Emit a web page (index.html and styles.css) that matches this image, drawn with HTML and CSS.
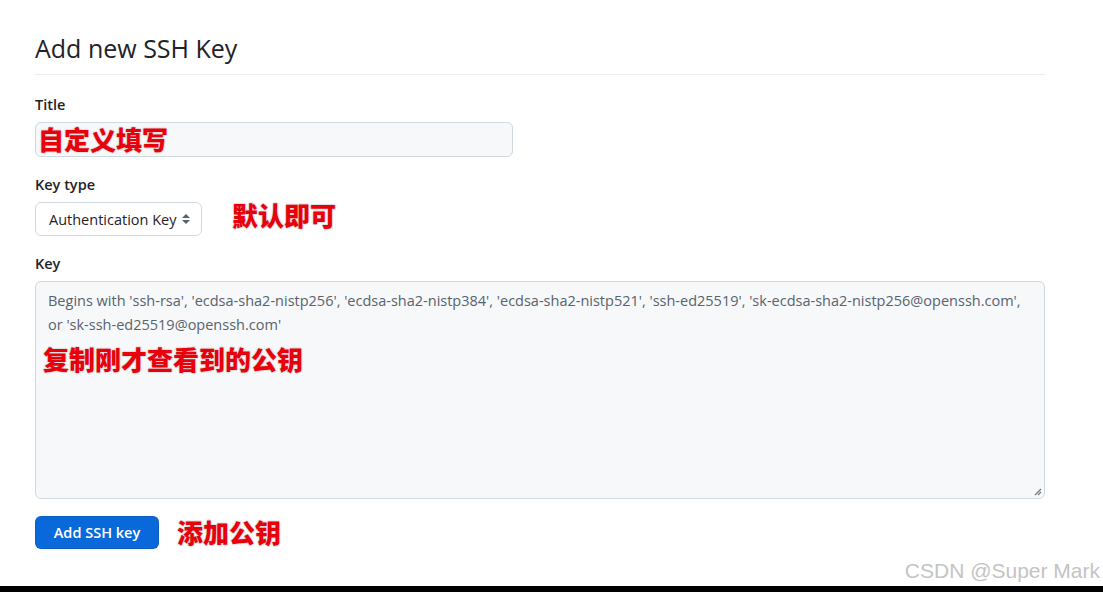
FILE: index.html
```html
<!DOCTYPE html>
<html lang="en">
<head>
<meta charset="utf-8">
<title>Add new SSH Key</title>
<link rel="stylesheet" href="styles.css">
</head>
<body>
<div class="screen">
  <main class="page">
    <h2 class="subhead">Add new SSH Key</h2>
    <form class="form">
      <div class="group">
        <label class="label" for="title">Title</label>
        <div class="field-wrap">
          <input id="title" class="input title-input" type="text">
          <span class="note note-title">自定义填写</span>
        </div>
      </div>
      <div class="group">
        <label class="label" for="type">Key type</label>
        <div class="row">
          <div class="select">
            <span>Authentication Key</span>
            <svg class="caret" width="10" height="12" viewBox="0 0 10 12"><path d="M5 1 L9 5 H1 Z M5 11 L9 7 H1 Z" fill="#59636e"/></svg>
          </div>
          <span class="note note-inline">默认即可</span>
        </div>
      </div>
      <div class="group">
        <label class="label" for="key">Key</label>
        <div class="field-wrap">
          <div class="textarea" id="key">
            <p class="placeholder">Begins with 'ssh-rsa', 'ecdsa-sha2-nistp256', 'ecdsa-sha2-nistp384', 'ecdsa-sha2-nistp521', 'ssh-ed25519', 'sk-ecdsa-sha2-nistp256@openssh.com',<br>or 'sk-ssh-ed25519@openssh.com'</p>
            <svg class="grip" width="8" height="8" viewBox="0 0 8 8"><path d="M7 1 L1 7 M7 4 L4 7" stroke="#6e7781" stroke-width="1.2"/></svg>
          </div>
          <span class="note note-key">复制刚才查看到的公钥</span>
        </div>
      </div>
      <div class="row actions">
        <button type="button" class="btn">Add SSH key</button>
        <span class="note note-inline note-btn">添加公钥</span>
      </div>
    </form>
    <span class="watermark">CSDN @Super Mark</span>
  </main>
  <div class="bottom-bar"></div>
</div>
</body>
</html>
```

FILE: styles.css
```css
* { box-sizing: border-box; }
html, body { margin: 0; padding: 0; background: #fff; }
body {
  font-family: "Open Sans", "Noto Sans", sans-serif;
  color: #1f2328;
}
.screen {
  width: 1103px;
  height: 592px;
  display: flex;
  flex-direction: column;
  overflow: hidden;
}
.page {
  flex: 1;
  position: relative;
  padding: 30px 0 0 35px;
}
.subhead {
  width: 1010px;
  margin: 0;
  font-size: 25px;
  line-height: 36px;
  font-weight: 400;
  color: #1f2328;
  padding-bottom: 8px;
  border-bottom: 1px solid #eaedf0;
}
.form { margin-top: 19px; }
.group { margin-bottom: 17px; }
.label {
  display: block;
  font-size: 14.5px;
  line-height: 21px;
  font-weight: 600;
  margin-bottom: 7px;
}
.field-wrap { position: relative; }
.input {
  display: block;
  width: 478px;
  height: 35px;
  border: 1px solid #d1d9e0;
  border-radius: 6px;
  background: #f6f8fa;
  font: inherit;
}
.row { display: flex; align-items: center; }
.select {
  width: 167px;
  height: 34px;
  border: 1px solid #d1d9e0;
  border-radius: 6px;
  background: #fff;
  display: flex;
  align-items: center;
  justify-content: space-between;
  padding: 0 10px 0 13px;
  font-size: 14.5px;
  color: #1f2328;
}
.caret { display: block; }
.textarea {
  position: relative;
  width: 1010px;
  height: 218px;
  border: 1px solid #d1d9e0;
  border-radius: 6px;
  background: #f6f8fa;
  padding: 7px 12px;
}
.placeholder {
  margin: 0;
  font-size: 14.5px;
  line-height: 24px;
  color: #59636e;
}
.grip { position: absolute; right: 2px; bottom: 2px; }
.actions { margin-top: 1px; }
.btn {
  width: 124px;
  height: 33px;
  border: 1px solid rgba(31,35,40,0.15);
  border-radius: 6px;
  background: #0969da;
  color: #fff;
  font-family: inherit;
  font-size: 14.5px;
  font-weight: 600;
  padding: 0;
}
.note {
  font-family: "Noto Sans CJK SC", sans-serif;
  font-weight: 900;
  font-size: 26px;
  line-height: 26px;
  color: #e8000b;
  text-shadow: 1px 0 1px #ddd, -1px 0 1px #ddd, 0 1px 1px #ddd, 0 -1px 1px #ddd;
  white-space: nowrap;
}
.note-title { position: absolute; left: 3px; top: 4px; }
.note-key { position: absolute; left: 8px; top: 65px; }
.note-inline { margin-left: 30px; margin-top: -8px; }
.note-btn { margin-left: 18px; margin-top: -1px; }
.watermark {
  position: absolute;
  right: 3px;
  bottom: 3px;
  font-family: "Liberation Sans", Arial, sans-serif;
  font-size: 21px;
  color: #c4c4c4;
  text-shadow: 0 0 1px #fff;
}
.bottom-bar { height: 6px; background: #000; flex: none; }
```
